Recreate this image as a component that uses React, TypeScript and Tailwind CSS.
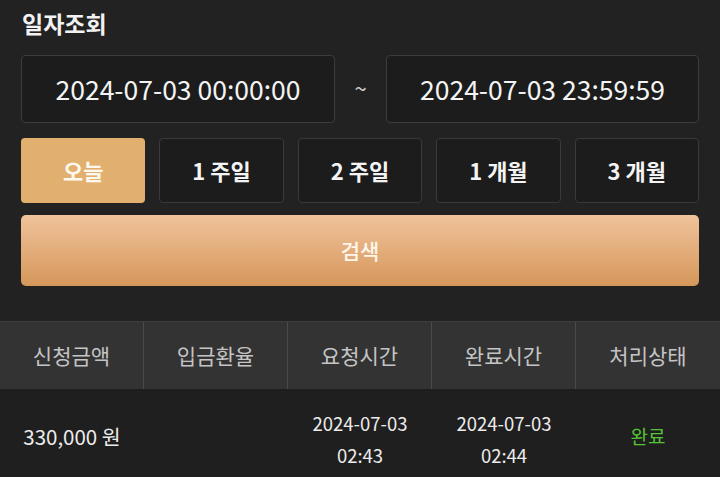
import React from "react";

const font = { fontFamily: '"Noto Sans CJK KR", "Noto Sans", sans-serif' };

export default function App() {
  const periods = ["오늘", "1 주일", "2 주일", "1 개월", "3 개월"];
  const headers = ["신청금액", "입금환율", "요청시간", "완료시간", "처리상태"];
  return (
    <div
      className="w-[720px] h-[477px] overflow-hidden bg-[#222222] text-white"
      style={font}
    >
      <div className="px-[21px]">
        <div className="h-[46px] flex items-center mb-[9px] pl-[1px] text-[23px] font-bold text-[#f2f2f2]">
          일자조회
        </div>
        <div className="flex h-[68px] items-stretch">
          <div className="w-[314px] rounded-[4px] border border-[#3c3c3c] bg-[#1c1c1c] flex items-center justify-center text-[26.5px] text-[#f4f4f4]">
            2024-07-03 00:00:00
          </div>
          <div className="flex-1 flex items-center justify-center text-[22px] text-[#cfcfcf] -mt-[4px]">
            ~
          </div>
          <div className="w-[313px] rounded-[4px] border border-[#3c3c3c] bg-[#1c1c1c] flex items-center justify-center text-[26.5px] text-[#f4f4f4]">
            2024-07-03 23:59:59
          </div>
        </div>
        <div className="mt-[15px] grid grid-cols-5 gap-[14px] h-[65px]">
          {periods.map((p, i) => (
            <div
              key={p}
              className={
                i === 0
                  ? "rounded-[4px] bg-[#e2b06e] flex items-center justify-center text-[22px] font-bold text-[#fff8ee]"
                  : "rounded-[4px] border border-[#3a3a3a] bg-[#1c1c1c] flex items-center justify-center text-[22px] font-bold text-[#f4f4f4]"
              }
            >
              {p}
            </div>
          ))}
        </div>
        <div className="mt-[12px] h-[71px] rounded-[5px] bg-gradient-to-b from-[#f0c39a] to-[#d5975b] flex items-center justify-center text-[21px] font-medium text-[#fff6ec]">
          검색
        </div>
      </div>
      <div className="mt-[35px]">
        <div className="grid grid-cols-5 h-[68px] bg-[#333333] border-t border-[#3d3d3d]">
          {headers.map((h, i) => (
            <div
              key={h}
              className={
                "flex items-center justify-center text-[21px] text-[#c4c4c4]" +
                (i < 4 ? " border-r border-[#4a4a4a]" : "")
              }
            >
              {h}
            </div>
          ))}
        </div>
        <div className="grid grid-cols-5 h-[100px] bg-[#1f1f1f] items-center text-[#ececec]">
          <div className="flex items-center justify-center text-[20.5px] -mt-[6px]">
            330,000 원
          </div>
          <div />
          <div className="flex flex-col items-center text-[18.5px] leading-[32px] -mt-[1px]">
            <span>2024-07-03</span>
            <span>02:43</span>
          </div>
          <div className="flex flex-col items-center text-[18.5px] leading-[32px] -mt-[1px]">
            <span>2024-07-03</span>
            <span>02:44</span>
          </div>
          <div className="flex items-center justify-center text-[19px] text-[#56c236] -mt-[6px]">
            완료
          </div>
        </div>
      </div>
    </div>
  );
}
